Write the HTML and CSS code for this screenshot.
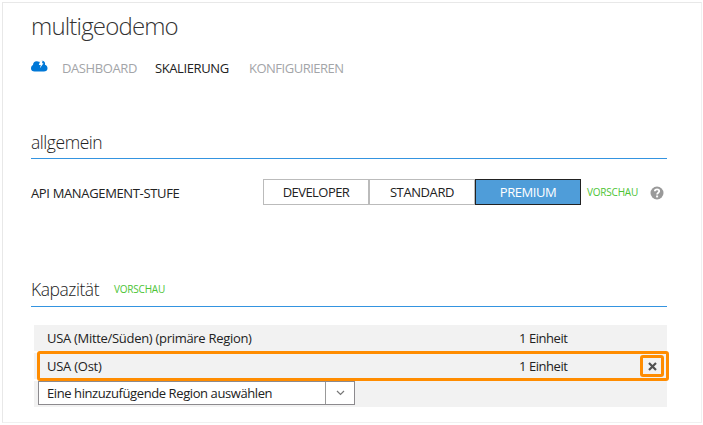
FILE: index.html
```html
<!DOCTYPE html>
<html lang="de">
<head>
<meta charset="utf-8">
<title>multigeodemo</title>
<link rel="stylesheet" href="styles.css">
</head>
<body>
<main class="panel">
  <h1 class="title"><span>multigeodemo</span></h1>
  <nav class="tabs">
    <svg class="cloud" viewBox="0 0 17 12" width="17" height="12"><path fill="#0078d7" d="M3.600 11.500C1.400 11.500 0 10.500 0 8.500C0 6.500 .8 5.400 2 5C2 2.500 3.500 1.200 5.600 1.200C6.700 1.200 7.700 1.500 8.400 2.100C9.600 .6 11 .3 12.400 1C13.900 1.800 14.300 3.200 14 4.700C15.500 5.100 16.500 6.400 16.500 8.200C16.500 10.400 15 11.500 12.900 11.500Z"/><path fill="#fff" d="M9.400 .6H11.600L11 3.200H12.500L8.900 8.300L9.800 5.100H7.800Z"/></svg>
    <a class="tab dash">DASHBOARD</a>
    <a class="tab scale active">SKALIERUNG</a>
    <a class="tab conf">KONFIGURIEREN</a>
  </nav>
  <section class="general">
    <h2 class="heading"><span class="h-general">allgemein</span></h2>
    <div class="tier">
      <span class="tier-label">API MANAGEMENT-STUFE</span>
      <div class="segments">
        <span class="segment"><span class="s-dev">DEVELOPER</span></span>
        <span class="segment"><span class="s-std">STANDARD</span></span>
        <span class="segment selected"><span class="s-prem">PREMIUM</span></span>
      </div>
      <span class="preview">VORSCHAU</span>
      <svg class="help" viewBox="0 0 14 14" width="14" height="14"><circle cx="7" cy="7" r="6.500" fill="#999"/><path d="M4.800 5.300C4.900 2.600 9.300 2.700 9.200 5.200C9.200 6.700 7.100 6.700 7.100 8.500" fill="none" stroke="#fff" stroke-width="1.800"/><path fill="#fff" d="M6.100 9.500h2v1.900h-2z"/></svg>
    </div>
  </section>
  <section class="capacity">
    <h2 class="heading"><span class="h-capacity">Kapazität</span><span class="preview">VORSCHAU</span></h2>
    <div class="regions">
      <div class="row"><span class="name"><span class="r-primary">USA (Mitte/Süden) (primäre Region)</span></span><span class="units">1 Einheit</span></div>
      <div class="row highlighted"><span class="name"><span class="r-east">USA (Ost)</span></span><span class="units">1 Einheit</span>
        <span class="remove"><svg viewBox="0 0 9 9" width="9" height="9"><path d="M1 1L8 8M8 1L1 8" stroke="#505050" stroke-width="2.200"/></svg></span>
      </div>
      <div class="row">
        <div class="select"><span class="value"><span class="r-add">Eine hinzuzufügende Region auswählen</span></span><span class="arrow"><svg viewBox="0 0 9 6" width="9" height="6"><path d="M1 1L4.500 4.500L8 1" fill="none" stroke="#777" stroke-width="1.200"/></svg></span></div>
      </div>
    </div>
  </section>
</main>
</body>
</html>
```
FILE: styles.css
```css
* { box-sizing: border-box; }
body {
  margin: 0;
  padding: 2px 0 0 2px;
  background: #fff;
  color: #222;
  font: 13px/20px "Open Sans", "Noto Sans", sans-serif;
}
h1, h2 { margin: 0; font-weight: 300; }
svg { display: block; flex: none; }
.panel {
  width: 700px;
  height: 421px;
  padding: 6px 0 0 28px;
  border: 1px solid #e8e8e8;
  border-right-color: #f0f0f0;
  border-bottom-color: #f0f0f0;
}
.title { height: 34px; font-size: 24px; line-height: 34px; letter-spacing: -.82px; color: #333; white-space: nowrap; }
.tabs { display: flex; height: 20px; margin-top: 15px; white-space: nowrap; }
.cloud { margin: 2px 14px 0 0; }
.tab { color: #a3a5a8; }
.active { color: #222; }
.dash { width: 93px; letter-spacing: -.4px; }
.scale { width: 94px; letter-spacing: -.4px; }
.conf { letter-spacing: -.5px; }
.general { margin-top: 54px; }
.heading {
  display: flex;
  width: 636px;
  height: 27px;
  border-bottom: 1px solid #3494e0;
  font-size: 17.5px;
  line-height: 20px;
  letter-spacing: -.45px;
  color: #222;
  white-space: nowrap;
}
.tier { display: flex; align-items: center; height: 26px; margin-top: 20px; white-space: nowrap; }
.tier-label { width: 232px; padding-top: 2px; letter-spacing: -.35px; }
.segments { display: flex; }
.segment {
  width: 106px;
  height: 26px;
  border: 1px solid #bbb;
  line-height: 25px;
  text-align: center;
}
.s-dev { letter-spacing: -.55px; }
.s-std { letter-spacing: -.4px; }
.s-prem { letter-spacing: -.45px; }
.selected { background: #4f9dd9; border-color: #222; color: #fff; }
.preview { width: 63px; margin-left: 6px; font-size: 10px; font-weight: 400; letter-spacing: -.2px; color: #4cc435; }
.help { margin-top: 2px; }
.capacity { margin-top: 74px; }
.capacity .heading { height: 28px; }
.h-capacity { width: 77px; }
.regions { display: grid; gap: 2px; width: 633px; margin: 18px 0 0 3px; }
.row {
  position: relative;
  display: flex;
  height: 26px;
  background: #f2f2f2;
  line-height: 26px;
  white-space: nowrap;
}
.name { width: 485px; padding-left: 13px; }
.r-primary { letter-spacing: -.3px; }
.r-east { letter-spacing: -.25px; }
.r-add { letter-spacing: -.41px; }
.units { letter-spacing: -.45px; }
.highlighted::before {
  content: "";
  position: absolute;
  inset: -2px -2px -2px 3px;
  border: 3px solid #ff8c00;
  border-radius: 3px;
}
.remove {
  position: absolute;
  z-index: 1;
  left: 606px;
  top: 2px;
  display: flex;
  align-items: center;
  justify-content: center;
  width: 24px;
  height: 22px;
  border: 3px solid #ff8c00;
  border-radius: 3px;
}
.select {
  display: flex;
  width: 317px;
  height: 24px;
  margin-left: 4px;
  border: 1px solid #8c8a8e;
  background: #fff;
  line-height: 23px;
}
.value { width: 287px; padding-left: 8px; border-right: 1px solid #999; }
.arrow { display: flex; flex: 1; align-items: center; justify-content: center; }
```
